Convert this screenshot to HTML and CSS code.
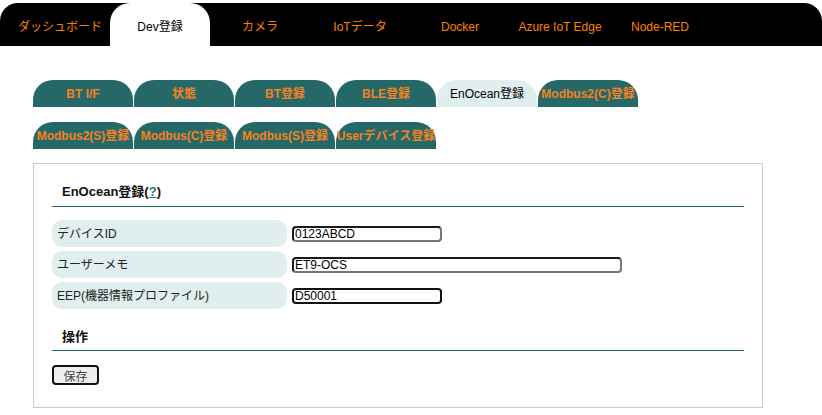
FILE: index.html
```html
<!DOCTYPE html>
<html lang="ja">
<head>
<meta charset="utf-8">
<title>EnOcean登録</title>
<link rel="stylesheet" href="styles.css">
</head>
<body>
<nav class="nav">
  <a class="nav-item">ダッシュボード</a>
  <a class="nav-item active">Dev登録</a>
  <a class="nav-item">カメラ</a>
  <a class="nav-item">IoTデータ</a>
  <a class="nav-item">Docker</a>
  <a class="nav-item">Azure IoT Edge</a>
  <a class="nav-item">Node-RED</a>
</nav>
<div class="tabs">
  <a class="tab">BT I/F</a>
  <a class="tab">状態</a>
  <a class="tab">BT登録</a>
  <a class="tab">BLE登録</a>
  <a class="tab active">EnOcean登録</a>
  <a class="tab">Modbus2(C)登録</a>
  <a class="tab">Modbus2(S)登録</a>
  <a class="tab">Modbus(C)登録</a>
  <a class="tab">Modbus(S)登録</a>
  <a class="tab">Userデバイス登録</a>
</div>
<section class="panel">
  <h2 class="section-title">EnOcean登録(<a class="help">?</a>)</h2>
  <div class="form">
    <div class="row">
      <div class="label">デバイスID</div>
      <input class="field short" type="text" value="0123ABCD">
    </div>
    <div class="row">
      <div class="label">ユーザーメモ</div>
      <input class="field long" type="text" value="ET9-OCS">
    </div>
    <div class="row">
      <div class="label">EEP(機器情報プロファイル)</div>
      <input class="field short focus" type="text" value="D50001">
    </div>
  </div>
  <h2 class="section-title op">操作</h2>
  <button class="btn" type="button">保存</button>
</section>
</body>
</html>
```

FILE: styles.css
```css
* { box-sizing: border-box; }

body {
  margin: 0;
  padding-top: 3px;
  font-family: "Liberation Sans", Arial, "Noto Sans CJK JP", sans-serif;
  font-size: 12px;
  color: #222;
  background: #fff;
}

.nav {
  display: flex;
  height: 43px;
  background: #000;
  border-radius: 18px 18px 0 0;
  padding-left: 10px;
}

.nav-item {
  width: 100px;
  text-align: center;
  padding-top: 6px;
  line-height: 37px;
  color: #ff8000;
  white-space: nowrap;
}

.nav-item.active {
  background: #fff;
  color: #000;
  border-radius: 20px 20px 0 0;
}

.tabs {
  display: flex;
  flex-wrap: wrap;
  row-gap: 15px;
  width: 612px;
  margin: 34px 0 0 33px;
}

.tab {
  width: 100px;
  height: 27px;
  margin-right: 1px;
  padding-top: 1px;
  line-height: 26px;
  text-align: center;
  white-space: nowrap;
  font-weight: bold;
  color: #f58220;
  background: #256868;
  border-radius: 20px 20px 0 0;
  display: flex;
  justify-content: center;
}

.tab.active {
  background: #e0eeee;
  color: #000;
  font-weight: normal;
}

.panel {
  width: 730px;
  margin: 14px 0 0 33px;
  border: 1px solid #ccc;
  padding: 0 18px 22px;
}

.section-title {
  margin: 18px 0 0;
  padding: 0 10px 4px;
  font-size: 13px;
  line-height: 20px;
  font-weight: bold;
  color: #111;
  border-bottom: 1px solid #256868;
}

.section-title.op {
  margin-top: 18px;
  padding-bottom: 3px;
}

.help {
  color: #2a7c7c;
  text-decoration: underline;
}

.form {
  display: flex;
  flex-direction: column;
  gap: 4px;
  margin-top: 13px;
}

.row {
  display: flex;
  align-items: center;
  gap: 5px;
  height: 27px;
}

.label {
  width: 235px;
  height: 27px;
  padding-top: 2px;
  line-height: 25px;
  padding-left: 5px;
  background: #e0eeee;
  border-radius: 10px;
  color: #222;
}

.field {
  height: 16px;
  padding: 0 1px;
  font-family: "Liberation Sans", Arial, sans-serif;
  font-size: 12px;
  color: #000;
  background: #fff;
  border: 2px solid;
  border-color: #1a1a1a #767676 #767676 #1a1a1a;
  border-radius: 4px;
  outline: none;
}

.field.short { width: 150px; }
.field.long { width: 330px; }
.field.focus { border-color: #111; }

.btn {
  display: block;
  margin-top: 14px;
  width: 47px;
  height: 20px;
  padding: 0;
  font-family: "Liberation Sans", Arial, "Noto Sans CJK JP", sans-serif;
  font-size: 12px;
  color: #444;
  background: #efefef;
  border: 2px solid #111;
  border-radius: 4px;
}
```
